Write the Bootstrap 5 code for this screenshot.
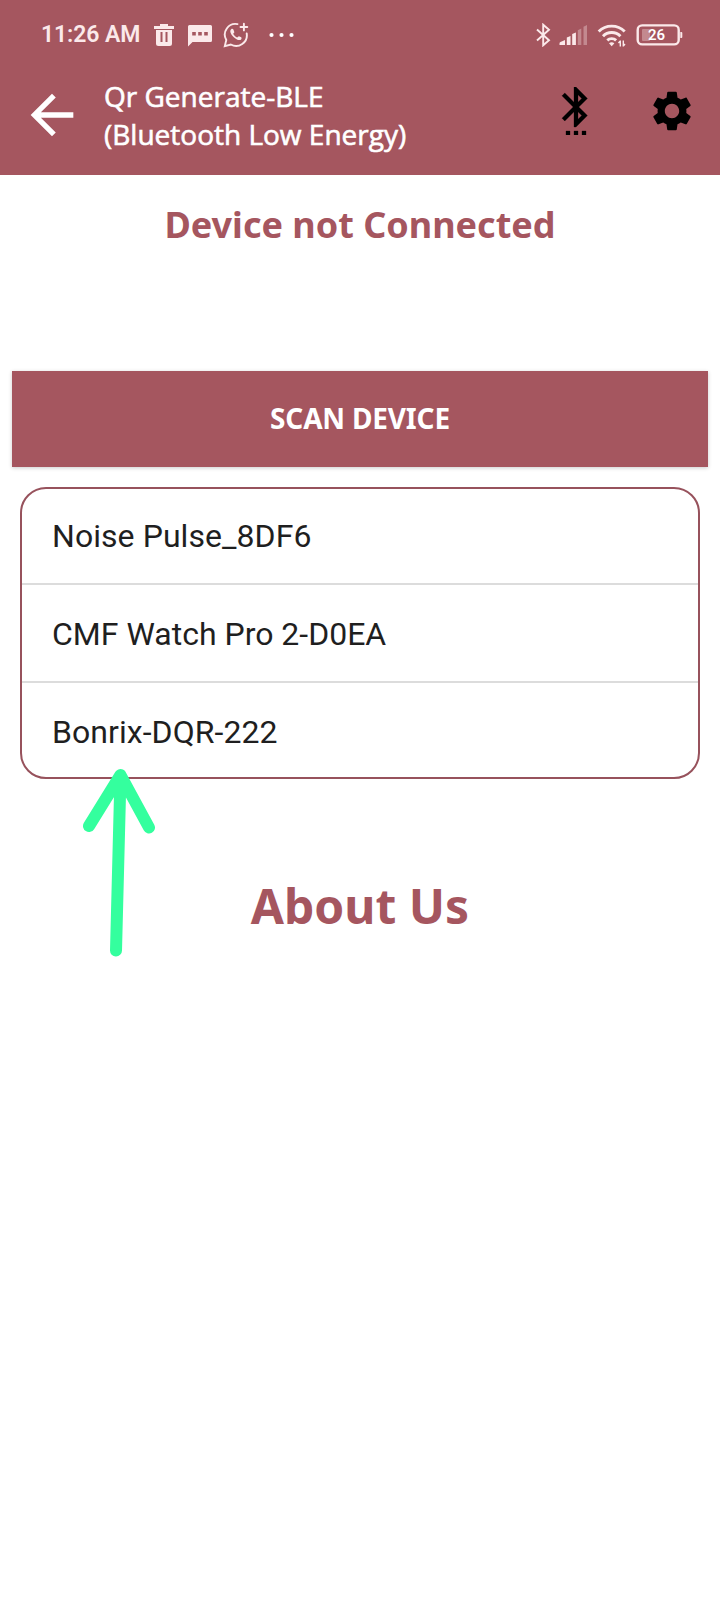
<!DOCTYPE html>
<html lang="en">
<head>
<meta charset="utf-8">
<meta name="viewport" content="width=device-width, initial-scale=1">
<title>Qr Generate-BLE</title>
<link href="https://cdn.jsdelivr.net/npm/bootstrap@5.3.0/dist/css/bootstrap.min.css" rel="stylesheet">
<style>
  :root { --brand: #a5565f; }
  body { font-family: "Noto Sans", sans-serif; background: #fff; min-height: 1600px; overflow-x: hidden; }
  svg { display: block; flex: none; }
  .app-header { background: var(--brand); height: 175px; }
  .status-bar { height: 70px; padding: 0 37px 0 41px; color: #fbe9ea; }
  .clock { font: 600 23px/26px Roboto, sans-serif; width: 99px; white-space: nowrap; letter-spacing: -.1px; }
  .toolbar { height: 105px; padding: 0 24px 0 20px; }
  .icon-btn { background: none; border: 0; padding: 0; line-height: 0; color: #000; }
  .app-title { font-family: "Open Sans", sans-serif; font-size: 28px; line-height: 38px; margin: -16px 0 0 20px; color: #fff; -webkit-text-stroke: .6px #fff; font-weight: 400; }
  .device-status { font-size: 36px; line-height: 50px; margin-top: 25px; color: var(--brand); }
  .scan-btn { --bs-btn-color: #fff; --bs-btn-bg: var(--brand); --bs-btn-hover-color: #fff; --bs-btn-hover-bg: #964c55;
    height: 96px; margin: 121px 12px 0; padding: 0 0 2px; width: 696px; font-size: 28px; letter-spacing: -.18px; font-weight: 700; box-shadow: 0 1px 4px rgba(0,0,0,.2); }
  .device-list { margin: 20px 20px 0; height: 292px; border: 2px solid #97525c; border-radius: 26px; overflow: visible; }
  .device-list .list-group-item { height: 98px; padding: 0 30px; font: 400 32px/98px Roboto, sans-serif; color: #1f1f1f; background: none; border-color: #dcdcdc; border-width: 0 0 2px; }
  .device-list .list-group-item:first-child { height: 96px; line-height: 94px; letter-spacing: .06px; }
  .device-list .list-group-item:last-child { height: 94px; border: 0; line-height: 98px; letter-spacing: .06px; }
  .pointer-mark { left: 60px; top: 280px; }
  .about-title { font-size: 48px; line-height: 64px; margin-top: 95px; color: var(--brand); }
</style>
</head>
<body>
<header class="app-header">
  <div class="status-bar d-flex align-items-center">
    <div class="clock">11:26 AM</div>
    <svg width="22" height="24" viewBox="0 0 22 24" style="margin-left:13px" fill="currentColor"><path fill-rule="evenodd" d="M7 1h8v2h6v3H1V3h6zM3 7h16v13.500q0 2.500-2.500 2.500h-11Q3 23 3 20.500zM7.500 9v10h2V9zm5 0v10h2V9z"/></svg>
    <svg width="26" height="24" viewBox="0 0 26 24" style="margin-left:12px" fill="currentColor"><path fill-rule="evenodd" d="M2.500 2h21q1.500 0 1.500 1.500v14q0 1.500-1.500 1.500H5.500L1 23.500V3.500Q1 2 2.500 2zM5.200 9v3.600h3.600V9zm6 0v3.600h3.600V9zm6 0v3.600h3.600V9z"/></svg>
    <svg width="26" height="26" viewBox="0 0 26 26" style="margin-left:10px" fill="none" stroke="currentColor" stroke-width="1.900" stroke-linecap="round"><path d="M14.500 2.100A10.700 10.700 0 0 0 3.300 18L1.800 24.100 7.800 22.500A10.700 10.700 0 0 0 23.700 11.500"/><path d="M17.500 5h6.800M20.900 1.700v6.700" stroke-width="1.900"/><path d="M8.200 7.200c-2.200 2 .1 5.600 2.600 8s6.300 4.200 7.600 1.700c.5-1 0-1.500-.7-1.900l-1.800-.8-1.700 1.400c-1.600-.6-3.200-2.100-4-3.800l1.200-1.500-.9-2.500c-.4-1-1.400-1.400-2.300-.6z" fill="currentColor" stroke="none"/></svg>
    <svg width="26" height="6" viewBox="0 0 26 6" style="margin:-1px 0 0 20px" fill="#fff"><circle cx="2.500" cy="3" r="2.100"/><circle cx="12.500" cy="3" r="2.100"/><circle cx="22.500" cy="3" r="2.100"/></svg>
    <svg class="ms-auto" width="15" height="24" viewBox="0 0 15 24" fill="none" stroke="currentColor" stroke-width="1.900"><path d="M1 6.500 13 17.200 7.200 22.300V1.700L13 6.800 1 17.500"/></svg>
    <svg width="30" height="22" viewBox="0 0 30 22" style="margin-left:8px" fill="currentColor"><path d="M.5 21v-1.500q0-1 1-1.400L6 16v5zM7.800 21v-7.500l3.700-1.500v9zM13.200 21V10l3.700-1.500V21z"/><path opacity=".35" d="M18.800 21V6.200l3.500-1.700V21zM24.500 21V2.800l3.500-1.700V21z"/></svg>
    <svg width="30" height="24" viewBox="0 0 30 24" style="margin-left:8px" fill="none" stroke="currentColor" stroke-width="2.900"><path d="M1.700 8.500a18.300 18.300 0 0 1 26 0M6 13.300a12 12 0 0 1 17.400 0M10.300 17.400a6.300 6.300 0 0 1 8.800 0"/><path d="M12 20.300q2.700-2.300 5.400 0l-2.700 2.900z" fill="currentColor" stroke="none"/><path d="M23.300 17.500v6M26.300 17.500v6M21.500 20l1.800-2M28 21l-1.700 2" stroke-width="1.400"/></svg>
    <svg width="47" height="22" viewBox="0 0 47 22" style="margin-left:9px"><rect x="1.700" y="1.400" width="41" height="19" rx="4.500" fill="none" stroke="currentColor" stroke-width="2.400"/><rect x="6" y="5" width="8" height="12" rx="1" fill="currentColor" opacity=".35"/><path d="M44.300 8h1q1 0 1 1v4q0 1-1 1h-1z" fill="currentColor"/><text x="20.500" y="16.200" text-anchor="middle" font-family="Roboto, sans-serif" font-size="15" font-weight="600" fill="#fff">26</text></svg>
  </div>
  <nav class="toolbar d-flex align-items-center">
    <button class="icon-btn text-white" type="button" aria-label="Back" style="margin-top:-15px"><svg width="64" height="64" viewBox="0 0 24 24" fill="currentColor"><path d="M20 11H7.830l5.590-5.590L12 4l-8 8 8 8 1.410-1.410L7.830 13H20z"/></svg></button>
    <h1 class="app-title">Qr Generate-BLE<br>(Bluetooth Low Energy)</h1>
    <button class="icon-btn ms-auto" type="button" aria-label="Bluetooth settings" style="margin-top:-23px"><svg width="48" height="48" viewBox="0 0 24 24" fill="currentColor" stroke="currentColor" stroke-width=".15"><path d="M11 24h2v-2h-2v2zm-4 0h2v-2H7v2zm8 0h2v-2h-2v2zm2.710-18.290L12 0h-1v7.590L6.410 3 5 4.410 10.590 10 5 15.590 6.410 17 11 12.410V20h1l5.710-5.710-4.300-4.290 4.300-4.290zM13 3.830l1.880 1.880L13 7.590V3.830zm1.880 10.460L13 16.170v-3.760l1.880 1.880z"/></svg></button>
    <button class="icon-btn" type="button" aria-label="Settings" style="margin:-23px 0 0 48px"><svg width="48" height="48" viewBox="0 0 24 24" fill="currentColor"><path d="M19.140 12.940c.04-.3.060-.61.060-.94 0-.32-.02-.64-.07-.94l2.030-1.580c.18-.14.23-.41.12-.61l-1.920-3.320c-.12-.22-.37-.29-.59-.22l-2.390.96c-.5-.38-1.030-.7-1.620-.94L14.400 2.810c-.04-.24-.24-.41-.48-.41h-3.840c-.24 0-.43.17-.47.41L9.250 5.350C8.660 5.590 8.120 5.920 7.630 6.290L5.240 5.330c-.22-.08-.47 0-.59.22L2.740 8.870c-.12.21-.08.47.12.61l2.030 1.580C4.840 11.360 4.800 11.690 4.800 12s.02.64.07.94l-2.030 1.580c-.18.14-.23.41-.12.61l1.920 3.320c.12.22.37.29.59.22l2.390-.96c.5.38 1.030.7 1.620.94l.36 2.540c.05.24.24.41.48.41h3.840c.24 0 .44-.17.47-.41l.36-2.540c.59-.24 1.130-.56 1.620-.94l2.390.96c.22.08.47 0 .59-.22l1.920-3.320c.12-.22.07-.47-.12-.61zM12 15.600c-1.980 0-3.600-1.620-3.600-3.600s1.620-3.600 3.600-3.600 3.600 1.620 3.600 3.600-1.620 3.600-3.600 3.600z"/></svg></button>
  </nav>
</header>
<main>
  <h2 class="device-status text-center fw-bold mb-0">Device not Connected</h2>
  <button class="btn scan-btn rounded-0 border-0 d-block" type="button">SCAN DEVICE</button>
  <div class="position-relative">
    <ul class="list-group device-list">
      <li class="list-group-item">Noise Pulse_8DF6</li>
      <li class="list-group-item">CMF Watch Pro 2-D0EA</li>
      <li class="list-group-item">Bonrix-DQR-222</li>
    </ul>
    <svg class="pointer-mark position-absolute" width="120" height="200" viewBox="60 767 120 200" fill="none" stroke="#34ff9e" stroke-width="12" stroke-linecap="round" stroke-linejoin="round"><path d="M116 950.500 120.500 775M89 826 120.500 775 149 827.500"/></svg>
  </div>
  <h2 class="about-title text-center fw-bold mb-0">About Us</h2>
</main>
<script src="https://cdn.jsdelivr.net/npm/bootstrap@5.3.0/dist/js/bootstrap.bundle.min.js"></script>
</body>
</html>
